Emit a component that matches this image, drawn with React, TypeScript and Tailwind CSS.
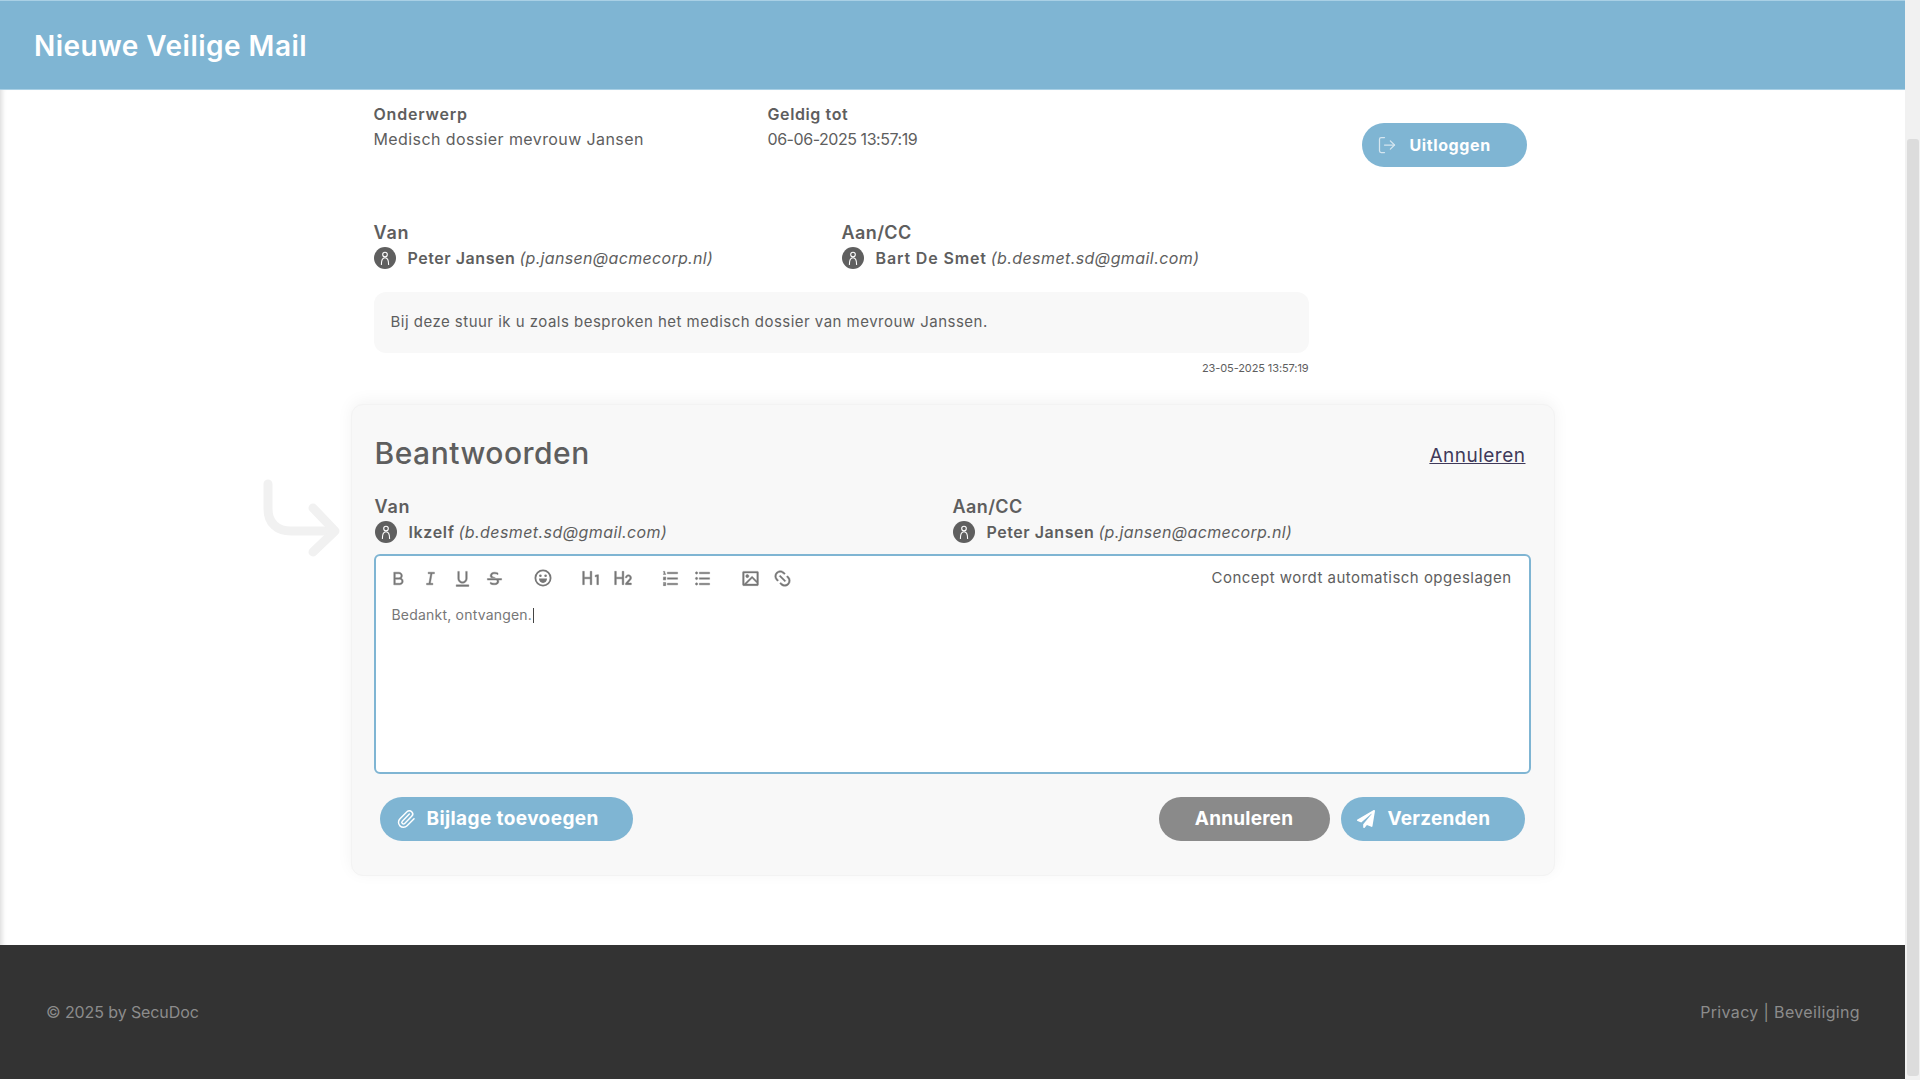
import { LogOut, Paperclip } from "lucide-react";
import { FaPaperPlane } from "react-icons/fa";
import {
  RiBold,
  RiItalic,
  RiUnderline,
  RiStrikethrough,
  RiH1,
  RiH2,
  RiListOrdered,
  RiListUnordered,
  RiImageLine,
  RiLink,
} from "react-icons/ri";

const Avatar = () => (
  <span className="flex size-[22px] shrink-0 items-center justify-center rounded-full bg-[#5f5f5f]">
    <svg width="14" height="16" viewBox="0 0 14 16" fill="none" stroke="white" strokeWidth="1.1">
      <circle cx="7" cy="4.6" r="2.3" />
      <path d="M3.4 14.4c0-4.2 1.4-6.6 3.6-6.6s3.6 2.4 3.6 6.6" strokeLinecap="round" />
    </svg>
  </span>
);

const Person = ({
  name,
  email,
  nameClass,
  emailClass,
}: {
  name: string;
  email: string;
  nameClass: string;
  emailClass: string;
}) => (
  <div className="mt-px flex h-[24px] items-center">
    <Avatar />
    <span className={`ml-[12px] text-[16px] font-semibold ${nameClass}`}>{name}</span>
    <span className={`ml-[4px] text-[16px] italic ${emailClass}`}>{email}</span>
  </div>
);

const Tool = ({ children }: { children: React.ReactNode }) => (
  <span className="flex h-[24px] w-[32px] items-center justify-center text-[#777] [&_svg]:stroke-current [&_svg]:stroke-[0.5]">
    {children}
  </span>
);

const Pill = ({ children, className }: { children: React.ReactNode; className: string }) => (
  <button className={`flex h-[44px] items-center rounded-full text-white ${className}`}>{children}</button>
);

export default function App() {
  return (
    <div className="flex h-screen w-full overflow-hidden bg-white font-['Inter',sans-serif] text-[#5e5e5e]">
      <div className="flex min-w-0 flex-1 flex-col">
        <header className="flex h-[90px] shrink-0 items-center border-y border-[#a9d0e5] bg-[#7fb5d3] pl-[34px]">
          <h1 className="translate-y-px text-[28px] font-semibold tracking-[0.48px] text-white">Nieuwe Veilige Mail</h1>
        </header>

        <main className="flex-1 shadow-[inset_6px_0_5px_-4px_rgba(0,0,0,0.14)]">
          <div className="mx-auto w-[1204px]">
            <div className="flex h-[131px] pl-[23px] pr-[28px]">
              <div className="w-[394px] pt-[12px]">
                <p className="text-[16px] leading-[24px] font-semibold tracking-[0.8px]">Onderwerp</p>
                <p className="mt-px text-[16px] leading-[24px] tracking-[0.4px]">Medisch dossier mevrouw Jansen</p>
              </div>
              <div className="flex-1 pt-[12px]">
                <p className="text-[16px] leading-[24px] font-semibold tracking-[0.6px]">Geldig tot</p>
                <p className="mt-px text-[16px] leading-[24px] tracking-[-0.45px]">06-06-2025 13:57:19</p>
              </div>
              <Pill className="mt-[33px] w-[165px] bg-[#7fb5d3] pl-[15px]">
                <LogOut className="size-[20px] text-[#d5e6f0]" strokeWidth={1.5} />
                <span className="ml-[13px] text-[16px] font-bold tracking-[0.6px]">Uitloggen</span>
              </Pill>
            </div>

            <div className="w-[958px] pl-[23px]">
              <div className="flex">
                <div className="w-[468px]">
                  <p className="text-[18px] leading-[24px] font-semibold tracking-[0.8px]">Van</p>
                  <Person
                    name="Peter Jansen"
                    email="(p.jansen@acmecorp.nl)"
                    nameClass="tracking-[0.55px]"
                    emailClass="tracking-[0.32px]"
                  />
                </div>
                <div>
                  <p className="text-[18px] leading-[24px] font-semibold tracking-[0.4px]">Aan/CC</p>
                  <Person
                    name="Bart De Smet"
                    email="(b.desmet.sd@gmail.com)"
                    nameClass="tracking-[0.85px]"
                    emailClass="tracking-[0.42px]"
                  />
                </div>
              </div>
              <div className="mt-[22px] flex h-[61px] items-center rounded-[12px] bg-[#f8f8f8] px-[17px] text-[15px] tracking-[0.48px]">
                Bij deze stuur ik u zoals besproken het medisch dossier van mevrouw Janssen.
              </div>
              <p className="mt-[8px] text-right text-[11px] leading-[14px] tracking-[-0.1px]">23-05-2025 13:57:19</p>
            </div>

            <section className="relative mt-[29px] h-[472px] rounded-[12px] border border-[#f3f3f3] bg-[#f8f8f8] pl-[23px] pr-[22px] pt-[27px] shadow-[0_-3px_16px_rgba(0,0,0,0.05)]">
              <svg
                className="absolute left-[-89px] top-[74px] text-[#f1f1f1]"
                width="78"
                height="78"
                viewBox="0 0 78 78"
                fill="none"
                stroke="currentColor"
                strokeWidth="9"
                strokeLinecap="round"
                strokeLinejoin="round"
              >
                <path d="M5 5v25c0 14 9 22 23 22h42" />
                <path d="M50 29l22 23-22 21" />
              </svg>

              <div className="flex items-center justify-between pr-[6px]">
                <h2 className="text-[30px] leading-[42px] font-medium tracking-[0.5px]">Beantwoorden</h2>
                <a className="translate-y-[3px] text-[19px] tracking-[0.5px] text-[#3f3a5a] underline">Annuleren</a>
              </div>

              <div className="mt-[21px] flex">
                <div className="w-[578px]">
                  <p className="text-[18px] leading-[24px] font-semibold tracking-[0.8px]">Van</p>
                  <Person
                    name="Ikzelf"
                    email="(b.desmet.sd@gmail.com)"
                    nameClass="tracking-[0.65px]"
                    emailClass="tracking-[0.42px]"
                  />
                </div>
                <div>
                  <p className="text-[18px] leading-[24px] font-semibold tracking-[0.4px]">Aan/CC</p>
                  <Person
                    name="Peter Jansen"
                    email="(p.jansen@acmecorp.nl)"
                    nameClass="tracking-[0.55px]"
                    emailClass="tracking-[0.32px]"
                  />
                </div>
              </div>

              <div className="-ml-px mt-[10px] h-[220px] w-[1157px] rounded-[6px] border-2 border-[#7fb5d3] bg-white">
                <div className="flex h-[44px] items-center pl-[7px] pr-[17px]">
                  <Tool><RiBold className="size-[19px]" /></Tool>
                  <Tool><RiItalic className="size-[19px]" /></Tool>
                  <Tool><RiUnderline className="size-[19px]" /></Tool>
                  <Tool><RiStrikethrough className="size-[19px]" /></Tool>
                  <span className="w-[16px]" />
                  <Tool>
                    <svg className="size-[18px]" viewBox="0 0 18 18" fill="none">
                      <circle cx="9" cy="9" r="7.6" stroke="currentColor" strokeWidth="1.8" />
                      <circle cx="6.4" cy="6.8" r="1.3" fill="currentColor" stroke="none" />
                      <circle cx="11.6" cy="6.8" r="1.3" fill="currentColor" stroke="none" />
                      <path d="M5 9.6h8c0 2.6-1.7 4.4-4 4.4s-4-1.8-4-4.4z" fill="currentColor" stroke="none" />
                    </svg>
                  </Tool>
                  <span className="w-[16px]" />
                  <Tool><RiH1 className="size-[20px]" /></Tool>
                  <Tool><RiH2 className="size-[20px]" /></Tool>
                  <span className="w-[16px]" />
                  <Tool><RiListOrdered className="size-[19px]" /></Tool>
                  <Tool><RiListUnordered className="size-[19px]" /></Tool>
                  <span className="w-[16px]" />
                  <Tool><RiImageLine className="size-[19px]" /></Tool>
                  <Tool><RiLink className="size-[19px] -scale-x-100" /></Tool>
                  <span className="ml-auto text-[15px] tracking-[0.47px]">Concept wordt automatisch opgeslagen</span>
                </div>
                <p className="mt-[5px] pl-[16px] text-[14px] leading-[20px] tracking-[0.2px] text-[#777]">
                  Bedankt, ontvangen.<span className="ml-px inline-block h-[15px] w-px translate-y-[3px] bg-[#444]" />
                </p>
              </div>

              <div className="mt-[23px] flex pl-[5px]">
                <Pill className="w-[253px] bg-[#7fb5d3] pl-[16px]">
                  <Paperclip className="size-[20px]" strokeWidth={1.75} />
                  <span className="ml-[11px] text-[19px] font-bold tracking-[0.4px]">Bijlage toevoegen</span>
                </Pill>
                <Pill className="ml-auto w-[171px] justify-center bg-[#8a8a8a]">
                  <span className="text-[19px] font-bold tracking-[0.2px]">Annuleren</span>
                </Pill>
                <Pill className="ml-[11px] mr-[7px] w-[184px] bg-[#7fb5d3] pl-[16px]">
                  <FaPaperPlane className="size-[18px]" />
                  <span className="ml-[13px] text-[19px] font-bold tracking-[0.2px]">Verzenden</span>
                </Pill>
              </div>
            </section>
          </div>
        </main>

        <footer className="mb-px flex h-[134px] shrink-0 items-center justify-between bg-[#333333] pl-[46px] pr-[45px] text-[16px] text-[#8c8c8c]">
          <span className="tracking-[-0.1px]">© 2025 by SecuDoc</span>
          <span className="tracking-[0.35px]">Privacy | Beveiliging</span>
        </footer>
      </div>

      <div className="w-[15px] shrink-0 bg-[#f1f1f1] pb-[4px] pl-[2px] pr-[1px] pt-[139px]">
        <div className="h-full rounded-[3px] bg-[#dcdcdc]" />
      </div>
    </div>
  );
}
